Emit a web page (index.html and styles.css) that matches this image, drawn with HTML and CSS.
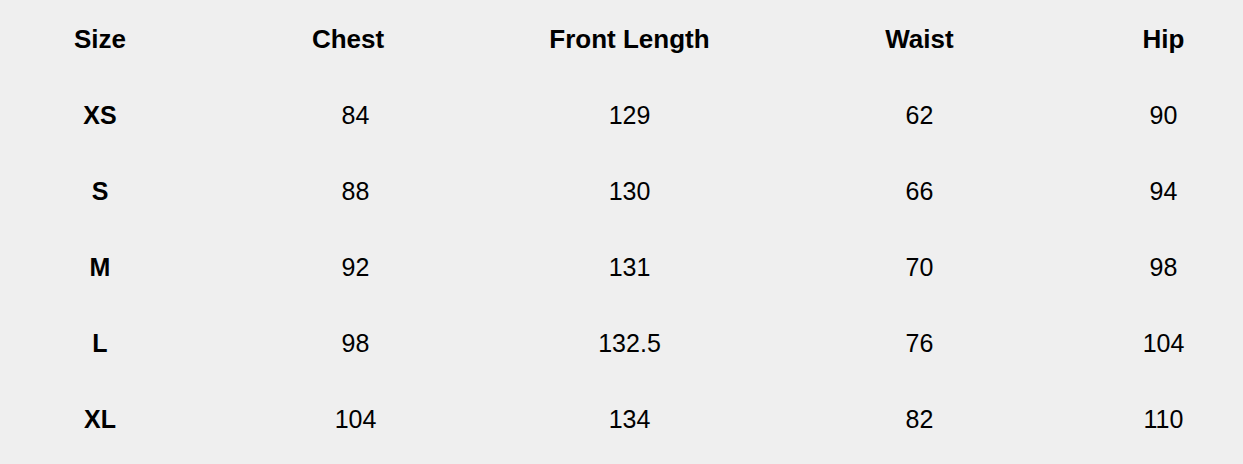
FILE: index.html
```html
<!DOCTYPE html>
<html>
<head>
<meta charset="utf-8">
<link rel="stylesheet" href="styles.css">
</head>
<body>
<div class="table">
  <div class="cell head">Size</div>
  <div class="cell head">Chest</div>
  <div class="cell head">Front Length</div>
  <div class="cell head">Waist</div>
  <div class="cell head last">Hip</div>

  <div class="cell size">XS</div>
  <div class="cell chest">84</div>
  <div class="cell">129</div>
  <div class="cell">62</div>
  <div class="cell last">90</div>

  <div class="cell size">S</div>
  <div class="cell chest">88</div>
  <div class="cell">130</div>
  <div class="cell">66</div>
  <div class="cell last">94</div>

  <div class="cell size">M</div>
  <div class="cell chest">92</div>
  <div class="cell">131</div>
  <div class="cell">70</div>
  <div class="cell last">98</div>

  <div class="cell size">L</div>
  <div class="cell chest">98</div>
  <div class="cell">132.5</div>
  <div class="cell">76</div>
  <div class="cell last">104</div>

  <div class="cell size">XL</div>
  <div class="cell chest">104</div>
  <div class="cell">134</div>
  <div class="cell">82</div>
  <div class="cell last">110</div>
</div>
</body>
</html>
```
FILE: styles.css
```css
html, body {
  margin: 0;
  padding: 0;
  background: #efefef;
  overflow: hidden;
}
body {
  width: 1243px;
  height: 464px;
  font-family: "Liberation Sans", Arial, sans-serif;
  color: #000;
}
.table {
  display: grid;
  grid-template-columns: 200px 296px 267px 313px 167px;
  grid-auto-rows: 76px;
  padding-top: 1px;
}
.cell {
  display: flex;
  align-items: center;
  justify-content: center;
  font-size: 25px;
}
.head, .size {
  font-weight: bold;
  font-size: 26px;
}
.size {
  font-size: 25px;
}
.chest {
  padding-left: 15px;
}
.last {
  padding-left: 8px;
}
```
